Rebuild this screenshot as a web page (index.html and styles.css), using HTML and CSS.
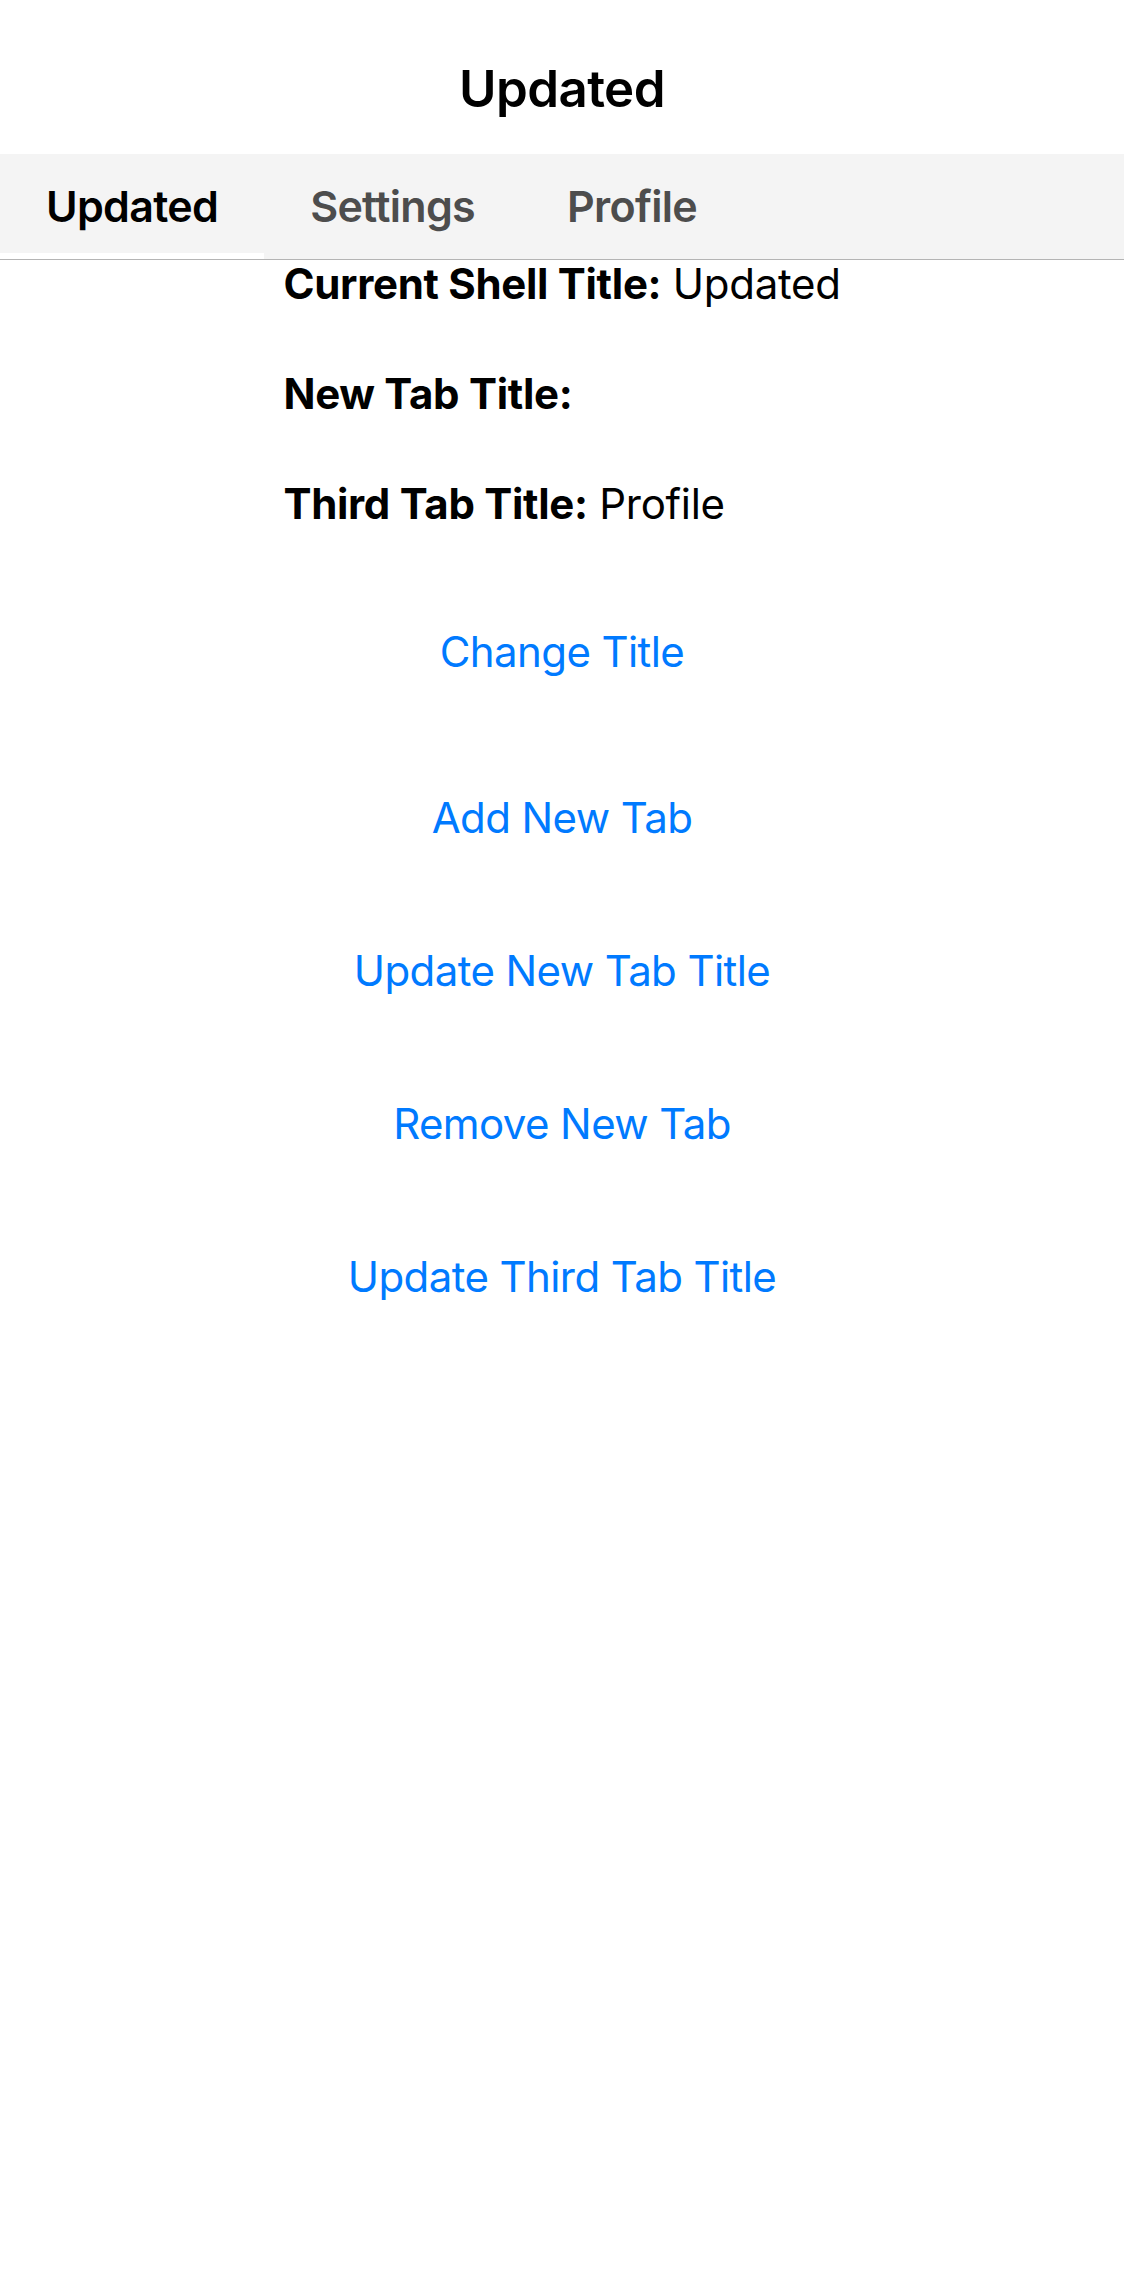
FILE: index.html
```html
<!DOCTYPE html>
<html lang="en">
<head>
<meta charset="utf-8">
<title>Updated</title>
<link rel="stylesheet" href="styles.css">
</head>
<body>
<header class="navbar">
  <h1 class="nav-title">Updated</h1>
</header>
<nav class="tabbar">
  <div class="tab tab-active">Updated</div>
  <div class="tab">Settings</div>
  <div class="tab">Profile</div>
</nav>
<main class="content">
  <div class="labels">
    <p class="label"><b>Current Shell Title:</b> Updated</p>
    <p class="label"><b>New Tab Title:</b></p>
    <p class="label"><b>Third Tab Title:</b> Profile</p>
  </div>
  <div class="buttons">
    <button class="btn btn-first" type="button">Change Title</button>
    <button class="btn" type="button">Add New Tab</button>
    <button class="btn" type="button">Update New Tab Title</button>
    <button class="btn" type="button">Remove New Tab</button>
    <button class="btn" type="button">Update Third Tab Title</button>
  </div>
</main>
</body>
</html>
```
FILE: styles.css
```css
* {
  box-sizing: border-box;
}

html, body {
  margin: 0;
  padding: 0;
  background: #ffffff;
}

body {
  width: 1124px;
  min-height: 2286px;
  font-family: Inter, "Noto Sans", "Liberation Sans", sans-serif;
  color: #000000;
}

.navbar {
  height: 154px;
  padding-top: 59px;
  background: #ffffff;
}

.nav-title {
  margin: 0;
  text-align: center;
  font-size: 51px;
  line-height: 60px;
  font-weight: 600;
  letter-spacing: -0.6px;
}

.tabbar {
  display: flex;
  background: #f4f4f4;
  border-bottom: 1px solid #b4b4b4;
}

.tab {
  padding: 27px 46px 22px;
  line-height: 50px;
  font-size: 43px;
  font-weight: 600;
  color: #4d4d4d;
  border-bottom: 6px solid transparent;
  letter-spacing: -0.7px;
}

.tab-active {
  color: #000000;
  border-bottom-color: #ffffff;
}

.content {
  display: flex;
  flex-direction: column;
  align-items: center;
}

.labels {
  display: flex;
  flex-direction: column;
  gap: 62px;
}

.label {
  margin: 0;
  font-size: 42px;
  line-height: 48px;
  font-weight: 400;
  letter-spacing: -0.3px;
}

.label b {
  font-weight: 700;
}

.buttons {
  display: flex;
  flex-direction: column;
  align-items: center;
  margin-top: 48px;
  width: 100%;
}

.btn {
  display: block;
  border: 0;
  background: transparent;
  padding: 52px 0 53px;
  font-family: inherit;
  font-size: 42px;
  line-height: 48px;
  font-weight: 400;
  color: #007aff;
  letter-spacing: -0.6px;
  cursor: pointer;
}

.btn-first {
  margin-bottom: 13px;
}
```
